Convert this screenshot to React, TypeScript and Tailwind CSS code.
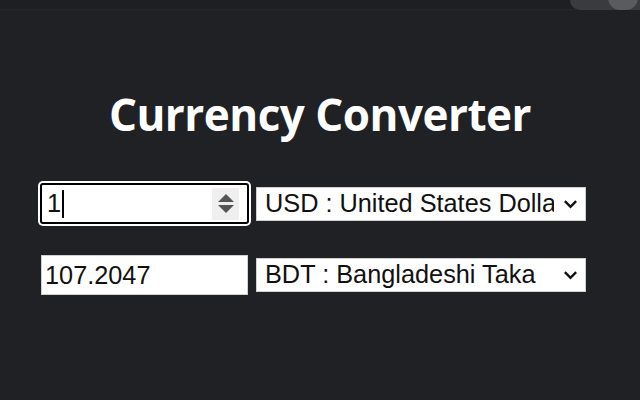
// Конвертер валют: заголовок, два поля суммы и два списка валют

const currencies = [
  { code: 'USD', name: 'United States Dollar' },
  { code: 'BDT', name: 'Bangladeshi Taka' },
  { code: 'EUR', name: 'Euro' },
  { code: 'INR', name: 'Indian Rupee' },
]

function Chevron() {
  return (
    <svg
      viewBox="0 0 16 10"
      className="pointer-events-none absolute right-[8px] top-1/2 h-[10px] w-[15px] -translate-y-1/2"
    >
      <path d="M2 2 L8 8 L14 2" fill="none" stroke="#111" strokeWidth="2.6" />
    </svg>
  )
}

function CurrencySelect({ value }: { value: string }) {
  return (
    <div className="relative w-[330px]">
      <select
        defaultValue={value}
        className="h-[34px] w-full appearance-none border border-[#d0d0d0] bg-white pl-[8px] pr-[31px] text-[25.3px] leading-none text-[#111] outline-none"
        style={{ fontFamily: '"Liberation Sans", Arial, sans-serif' }}
      >
        {currencies.map((c) => (
          <option key={c.code} value={c.code}>
            {c.code} : {c.name}
          </option>
        ))}
      </select>
      <Chevron />
    </div>
  )
}

function Spinner() {
  return (
    <div className="absolute right-[8px] top-1/2 flex h-[32px] w-[27px] -translate-y-1/2 flex-col items-center justify-center gap-[3px] bg-[#efefef]">
      <svg viewBox="0 0 16 8" className="h-[8px] w-[16px]">
        <path d="M0 8 L8 0 L16 8 Z" fill="#555" />
      </svg>
      <svg viewBox="0 0 16 8" className="h-[8px] w-[16px]">
        <path d="M0 0 L8 8 L16 0 Z" fill="#555" />
      </svg>
    </div>
  )
}

export default function App() {
  const font = { fontFamily: '"Liberation Sans", Arial, sans-serif' }

  return (
    <div className="relative min-h-[400px] w-full bg-[#202124]">
      {/* полоска вкладок браузера сверху */}
      <div className="relative h-[10px] border-b border-[#26272a] bg-[#1e1f22]">
        <div className="absolute right-0 top-0 h-[10px] w-[70px] rounded-bl-[16px] bg-[#3a3b3f]" />
        <div className="absolute right-[2px] top-[-14px] h-[24px] w-[30px] rounded-full bg-[#5a5b5f]" />
      </div>

      <h1
        className="mt-[74px] text-center text-[44px] font-bold leading-[60px] tracking-[-0.5px] text-white"
        style={{ fontFamily: '"Open Sans", sans-serif' }}
      >
        Currency Converter
      </h1>

      <div className="mt-[37px] flex flex-col gap-[29px] pl-[38px]">
        <div className="flex items-center gap-[5px]">
          <div className="rounded-[5px] bg-white p-[2px]">
            <div className="rounded-[3px] bg-black p-[2px]">
              <div
                className="relative flex h-[37px] w-[205px] items-center rounded-[1px] bg-white pl-[5px] text-[25.3px] text-[#111]"
                style={font}
              >
                <span>1</span>
                <span className="ml-[1px] h-[28px] w-[1.5px] bg-black" />
                <Spinner />
              </div>
            </div>
          </div>
          <CurrencySelect value="USD" />
        </div>

        <div className="flex items-center gap-[8px] pl-[3px]">
          <input
            readOnly
            value="107.2047"
            className="h-[40px] w-[207px] border border-[#d0d0d0] bg-white pl-[3px] text-[25.3px] text-[#111] outline-none"
            style={font}
          />
          <CurrencySelect value="BDT" />
        </div>
      </div>
    </div>
  )
}
